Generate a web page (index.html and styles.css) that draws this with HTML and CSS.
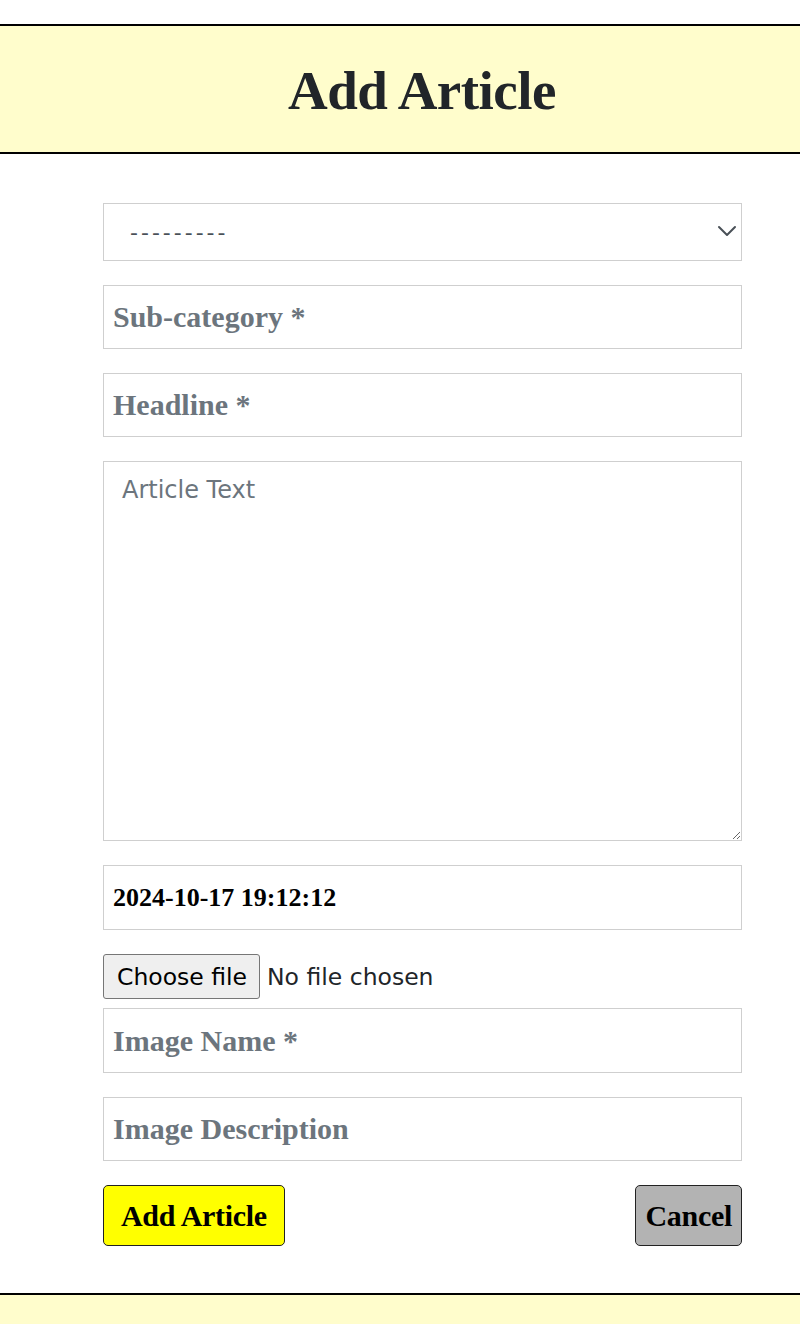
FILE: index.html
```html
<!DOCTYPE html>
<html lang="en">
<head>
<meta charset="utf-8">
<title>Add Article</title>
<link rel="stylesheet" href="styles.css">
</head>
<body>
<header class="page-header">
  <h1 class="page-title">Add Article</h1>
</header>
<main class="content">
  <form class="article-form">
    <div class="select-wrap">
      <select class="field select-field">
        <option>---------</option>
      </select>
      <svg class="chevron" width="20" height="12" viewBox="0 0 20 12" aria-hidden="true">
        <path d="M2 2 L10 10 L18 2" fill="none" stroke="#495057" stroke-width="2" stroke-linecap="round" stroke-linejoin="round"/>
      </svg>
    </div>
    <input class="field text-field" type="text" placeholder="Sub-category *">
    <input class="field text-field" type="text" placeholder="Headline *">
    <textarea class="field area-field" placeholder="Article Text"></textarea>
    <input class="field text-field date-field" type="text" value="2024-10-17 19:12:12">
    <label class="file-field">
      <input class="file-input" type="file">
      <span class="file-button">Choose file</span>
      <span class="file-status">No file chosen</span>
    </label>
    <input class="field text-field tight" type="text" placeholder="Image Name *">
    <input class="field text-field" type="text" placeholder="Image Description">
    <div class="actions">
      <button type="button" class="btn btn-add">Add Article</button>
      <button type="button" class="btn btn-cancel">Cancel</button>
    </div>
  </form>
</main>
<footer class="page-footer"></footer>
</body>
</html>
```

FILE: styles.css
```css
html, body {
  margin: 0;
  padding: 0;
  background: #ffffff;
}

body {
  font-family: "Liberation Serif", "Times New Roman", serif;
  color: #212529;
}

.page-header {
  margin-top: 24px;
  height: 126px;
  background: #fffdcc;
  border-top: 2px solid #000;
  border-bottom: 2px solid #000;
  display: flex;
  align-items: center;
  justify-content: center;
  padding-left: 44px;
}

.page-title {
  margin: 0;
  font-size: 55px;
  font-weight: 700;
  color: #212529;
  line-height: 1;
  padding-top: 2px;
  letter-spacing: -0.5px;
}

.content {
  padding: 49px 0 47px 103px;
}

.article-form {
  width: 639px;
  display: flex;
  flex-direction: column;
}

.field {
  box-sizing: border-box;
  width: 100%;
  border: 1px solid #cfcfcf;
  border-radius: 0;
  background: #fff;
  margin: 0 0 24px 0;
  outline: none;
}

.select-wrap {
  position: relative;
}

.select-field {
  appearance: none;
  -webkit-appearance: none;
  height: 58px;
  padding: 0 0 0 26px;
  font-family: "DejaVu Sans", sans-serif;
  font-size: 22px;
  letter-spacing: 3px;
  color: #495057;
}

.chevron {
  position: absolute;
  right: 5px;
  top: 22px;
  pointer-events: none;
}

.text-field {
  height: 64px;
  padding: 0 9px;
  font-family: "Liberation Serif", serif;
  font-weight: 700;
  font-size: 30px;
  color: #000;
}

.text-field::placeholder {
  color: #6c757d;
  opacity: 1;
}

.date-field {
  height: 65px;
  font-size: 26px;
}

.tight {
  height: 65px;
}

.area-field {
  height: 380px;
  padding: 14px 18px;
  resize: vertical;
  font-family: "DejaVu Sans", sans-serif;
  font-size: 24px;
  color: #212529;
}

.area-field::placeholder {
  color: #6c757d;
  opacity: 1;
}

.file-field {
  display: flex;
  align-items: center;
  height: 45px;
  margin: 0 0 9px 0;
  font-family: "DejaVu Sans", sans-serif;
  font-size: 23.5px;
  color: #212529;
}

.file-input {
  display: none;
}

.file-button {
  box-sizing: border-box;
  height: 45px;
  display: flex;
  align-items: center;
  padding: 0 12px 0 13px;
  margin-right: 7px;
  background: #efefef;
  border: 1px solid #767676;
  border-radius: 3px;
  color: #000;
}

.file-status {
  color: #212529;
}

.actions {
  display: flex;
  justify-content: space-between;
  align-items: center;
}

.btn {
  height: 61px;
  font-family: "Liberation Serif", serif;
  font-weight: 700;
  font-size: 30px;
  color: #000;
  border: 1px solid #222;
  border-radius: 5px;
  letter-spacing: -0.3px;
}

.btn-add {
  background: #ffff00;
  padding: 0 17px;
}

.btn-cancel {
  background: #b3b3b3;
  padding: 0 9px;
}

.page-footer {
  height: 29px;
  background: #fffdcc;
  border-top: 2px solid #000;
}
```
